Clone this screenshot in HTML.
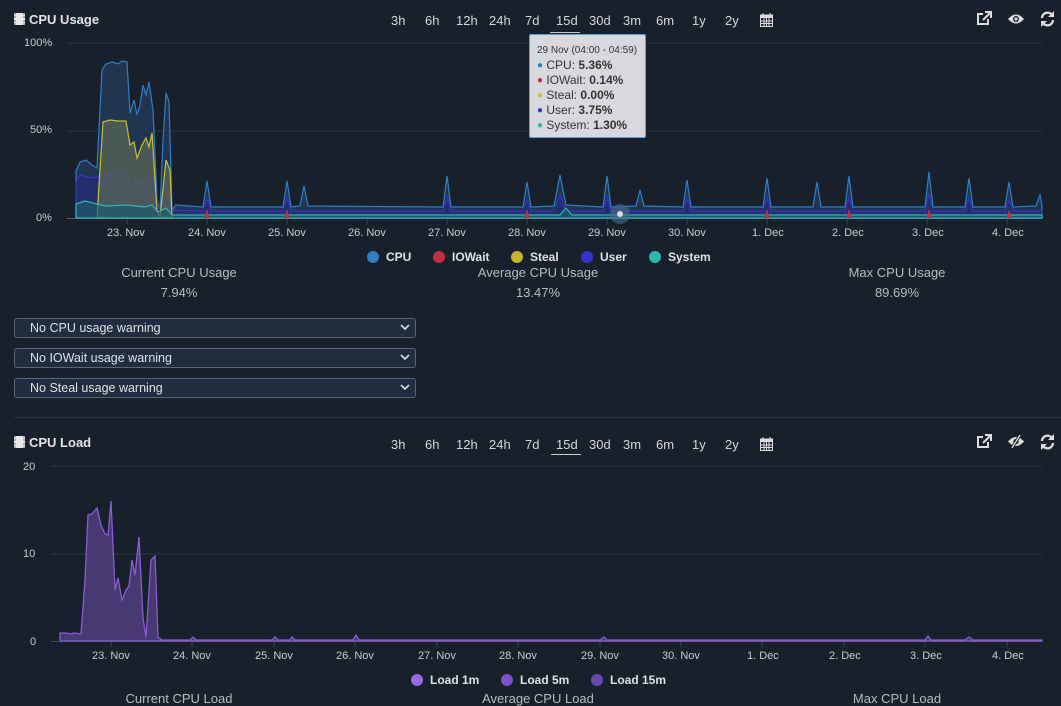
<!DOCTYPE html>
<html><head><meta charset="utf-8">
<style>
*{margin:0;padding:0;box-sizing:border-box}
body{width:1061px;height:693px;background:#18202b;font-family:"Liberation Sans",sans-serif;color:#d8dce0;position:relative;overflow:hidden}
.a{position:absolute;white-space:nowrap}
.title{font-weight:bold;font-size:13px;color:#e4e6e8}
.chip{display:inline-block;width:11px;height:12px;background:#e8e8e8;border-left:2px dotted #aaa;border-right:2px dotted #aaa;vertical-align:-1px;margin-right:4px}
.rng{font-size:13px;color:#d6d9dc}
.ax{font-size:11px;color:#c8ccd0}
.stat{font-size:13px;color:#b8bcc0;text-align:center;width:240px}
.sel{position:absolute;left:14px;width:402px;height:20px;border:1px solid #5c6672;border-radius:3px;background:#1f2d3e;font-size:12.5px;color:#dfe2e5;padding:2px 0 0 15px}
.sel svg{position:absolute;right:5px;top:5px}
.lg{font-size:12px;font-weight:bold;color:#dfe2e5}
.dot{display:inline-block;width:12px;height:12px;border-radius:50%;vertical-align:-2px;margin-right:7px}
.td{font-size:10px;vertical-align:1px}
</style></head><body>

<div class="a title" style="left:14px;top:12px"><span class="chip"></span>CPU Usage</div>
<div class="a rng" style="top:13px;left:391px">3h</div>
<div class="a rng" style="top:13px;left:425px">6h</div>
<div class="a rng" style="top:13px;left:456px">12h</div>
<div class="a rng" style="top:13px;left:489px">24h</div>
<div class="a rng" style="top:13px;left:525px">7d</div>
<div class="a rng" style="top:13px;left:556px">15d</div>
<div class="a" style="top:32px;left:550px;width:30px;height:1px;background:#ccc"></div>
<div class="a rng" style="top:13px;left:589px">30d</div>
<div class="a rng" style="top:13px;left:623px">3m</div>
<div class="a rng" style="top:13px;left:656px">6m</div>
<div class="a rng" style="top:13px;left:692px">1y</div>
<div class="a rng" style="top:13px;left:725px">2y</div>
<svg class="a" style="left:760px;top:13px" width="13" height="14" viewBox="0 0 13 14"><rect x="0.5" y="2" width="12" height="11.5" fill="none" stroke="#ddd"/><rect x="0.5" y="2" width="12" height="3" fill="#ddd"/><path d="M3 0v3M10 0v3M1 8h11M1 10.5h11M4 5v8M6.5 5v8M9 5v8" stroke="#ddd" stroke-width="1"/></svg>
<svg class="a" style="left:976px;top:11px" width="16" height="15" viewBox="0 0 16 15"><path d="M7 3H2v10h10V8" fill="none" stroke="#ddd" stroke-width="2"/><path d="M9 1h6v6M15 1L7 9" fill="none" stroke="#ddd" stroke-width="2"/></svg>
<svg class="a" style="left:1007px;top:13px" width="18" height="12" viewBox="0 0 18 12"><path d="M1 6Q9 -3 17 6Q9 15 1 6Z" fill="#ddd"/><circle cx="9" cy="6" r="3" fill="#18202b"/><circle cx="9" cy="6" r="1.6" fill="#ddd"/></svg>
<svg class="a" style="left:1040px;top:11px" width="15" height="16" viewBox="0 0 15 16"><path d="M2 7A5.5 5.5 0 0 1 12 4M13 9A5.5 5.5 0 0 1 3 12" fill="none" stroke="#ddd" stroke-width="2.4"/><path d="M14 0v6h-6zM1 16v-6h6z" fill="#ddd"/></svg>

<div class="a ax" style="left:24px;top:37px">100%</div>
<div class="a ax" style="left:30px;top:124px">50%</div>
<div class="a ax" style="left:36px;top:212px">0%</div>
<svg class="a" style="left:0;top:0" width="1061" height="240">
<path d="M67 43H1042M67 131H1042" stroke="#2b3746" stroke-width="1"/>
<path d="M67 218.5H1042" stroke="#5a6470"/>
<path d="M127 218v6M207 218v6M287 218v6M367 218v6M447 218v6M527 218v6M607 218v6M687 218v6M767 218v6M847 218v6M927 218v6M1007 218v6" stroke="#3a4656"/>
<path d="M76,171 L80,162 L86,160 L92,165 L97,168 L102,70 L106,64 L112,62 L118,64 L122,61 L127,62 L130,113 L134,100 L137,115 L140,105 L143,85 L146,95 L149,82 L153,110 L157,200 L160,210 L163,140 L166,93 L169,102 L172,210 L176,205 L203,207 L207,181 L211,207 L283,207 L287,181 L291,207 L300,206 L304,186 L308,206 L443,207 L447,176 L451,207 L523,207 L527,182 L531,207 L554,206 L560,175 L566,205 L603,207 L607,176 L611,207 L636,206 L640,190 L644,206 L683,207 L687,180 L691,207 L763,207 L767,178 L771,207 L813,207 L817,182 L821,207 L845,207 L849,176 L853,207 L925,207 L929,172 L933,207 L965,207 L969,178 L973,207 L1005,207 L1009,182 L1013,207 L1036,206 L1040,195 L1042,205 L1042,218 L76,218Z" fill="#1f3550" stroke="#2f7fc4" stroke-width="1.2"/>
<path d="M76,182 L80,175 L92,178 L103,175 L118,172 L127,173 L130,185 L145,180 L153,175 L160,212 L166,180 L172,210 L203,211 L207,198 L211,211 L283,211 L287,197 L291,211 L443,211 L447,195 L451,211 L523,211 L527,200 L531,211 L554,211 L560,195 L566,211 L603,211 L607,195 L611,211 L683,211 L687,198 L691,211 L763,211 L767,197 L771,211 L845,211 L849,197 L853,211 L925,211 L929,193 L933,211 L965,211 L969,197 L973,211 L1005,211 L1009,200 L1013,211 L1042,211 L1042,218 L76,218Z" fill="#242e6e" fill-opacity="0.85" stroke="#3434c8" stroke-width="1.2"/>
<path d="M97,218 L103,122 L110,120 L118,121 L126,121 L130,145 L134,142 L137,158 L142,145 L146,138 L149,147 L152,133 L157,210 L160,217 L166,160 L170,170 L172,218Z" fill="#5d6a58" fill-opacity="0.7" stroke="#c9c030" stroke-width="1.2"/>
<path d="M76,204 L85,201 L105,206 L127,205 L145,207 L152,205 L158,212 L166,208 L172,215 L560,215 L566,208 L572,215 L1042,215 L1042,218 L76,218Z" fill="#1f5a6a" fill-opacity="0.7" stroke="#2fb8b0" stroke-width="1.2"/>
<path d="M205,218 L207,210 L209,218M285,218 L287,210 L289,218M525,218 L527,210 L529,218M765,218 L767,210 L769,218M847,218 L849,210 L851,218M927,218 L929,210 L931,218M1007,218 L1009,211 L1011,218" fill="#b83040" stroke="#c03040"/>
<circle cx="620" cy="214" r="10" fill="#4a6a90" fill-opacity="0.6"/>
<circle cx="620" cy="214" r="3" fill="#ddd"/>
</svg>
<div class="a ax" style="left:107px;top:227px">23. Nov</div>
<div class="a ax" style="left:188px;top:227px">24. Nov</div>
<div class="a ax" style="left:268px;top:227px">25. Nov</div>
<div class="a ax" style="left:348px;top:227px">26. Nov</div>
<div class="a ax" style="left:428px;top:227px">27. Nov</div>
<div class="a ax" style="left:508px;top:227px">28. Nov</div>
<div class="a ax" style="left:588px;top:227px">29. Nov</div>
<div class="a ax" style="left:668px;top:227px">30. Nov</div>
<div class="a ax" style="left:752px;top:227px">1. Dec</div>
<div class="a ax" style="left:832px;top:227px">2. Dec</div>
<div class="a ax" style="left:912px;top:227px">3. Dec</div>
<div class="a ax" style="left:992px;top:227px">4. Dec</div>

<div class="a" style="left:529px;top:34px;width:117px;height:104px;background:#d8d9dc;border:1px solid #5aa0e0;border-radius:2px;color:#333;font-size:12px;padding:9px 0 0 7px;line-height:15px">
<div style="font-size:10px;line-height:13px;margin-bottom:1px">29 Nov (04:00 - 04:59)</div>
<div><span class="td" style="color:#2f7fc4">●</span> CPU: <b>5.36%</b></div>
<div><span class="td" style="color:#c03040">●</span> IOWait: <b>0.14%</b></div>
<div><span class="td" style="color:#c9c030">●</span> Steal: <b>0.00%</b></div>
<div><span class="td" style="color:#3434c8">●</span> User: <b>3.75%</b></div>
<div><span class="td" style="color:#2fb8b0">●</span> System: <b>1.30%</b></div>
</div>

<div class="a lg" style="left:367px;top:250px"><span class="dot" style="background:#2f7fc4"></span>CPU</div>
<div class="a lg" style="left:433px;top:250px"><span class="dot" style="background:#c03040"></span>IOWait</div>
<div class="a lg" style="left:511px;top:250px"><span class="dot" style="background:#c0b430"></span>Steal</div>
<div class="a lg" style="left:581px;top:250px"><span class="dot" style="background:#3434c8"></span>User</div>
<div class="a lg" style="left:649px;top:250px"><span class="dot" style="background:#2fb8b0"></span>System</div>

<div class="a stat" style="left:59px;top:265px">Current CPU Usage</div>
<div class="a stat" style="left:59px;top:285px">7.94%</div>
<div class="a stat" style="left:418px;top:265px">Average CPU Usage</div>
<div class="a stat" style="left:418px;top:285px">13.47%</div>
<div class="a stat" style="left:777px;top:265px">Max CPU Usage</div>
<div class="a stat" style="left:777px;top:285px">89.69%</div>

<div class="sel" style="top:318px">No CPU usage warning<svg width="10" height="7"><path d="M1 1l4 4 4-4" fill="none" stroke="#ddd" stroke-width="1.6"/></svg></div>
<div class="sel" style="top:348px">No IOWait usage warning<svg width="10" height="7"><path d="M1 1l4 4 4-4" fill="none" stroke="#ddd" stroke-width="1.6"/></svg></div>
<div class="sel" style="top:378px">No Steal usage warning<svg width="10" height="7"><path d="M1 1l4 4 4-4" fill="none" stroke="#ddd" stroke-width="1.6"/></svg></div>

<div class="a" style="left:14px;top:417px;width:1047px;height:1px;background:#2a3442"></div>

<div class="a title" style="left:14px;top:435px"><span class="chip"></span>CPU Load</div>
<div class="a rng" style="top:437px;left:391px">3h</div>
<div class="a rng" style="top:437px;left:425px">6h</div>
<div class="a rng" style="top:437px;left:456px">12h</div>
<div class="a rng" style="top:437px;left:489px">24h</div>
<div class="a rng" style="top:437px;left:525px">7d</div>
<div class="a rng" style="top:437px;left:556px">15d</div>
<div class="a" style="top:454px;left:551px;width:30px;height:1px;background:#ccc"></div>
<div class="a rng" style="top:437px;left:589px">30d</div>
<div class="a rng" style="top:437px;left:623px">3m</div>
<div class="a rng" style="top:437px;left:656px">6m</div>
<div class="a rng" style="top:437px;left:692px">1y</div>
<div class="a rng" style="top:437px;left:725px">2y</div>
<svg class="a" style="left:760px;top:437px" width="13" height="14" viewBox="0 0 13 14"><rect x="0.5" y="2" width="12" height="11.5" fill="none" stroke="#ddd"/><rect x="0.5" y="2" width="12" height="3" fill="#ddd"/><path d="M3 0v3M10 0v3M1 8h11M1 10.5h11M4 5v8M6.5 5v8M9 5v8" stroke="#ddd" stroke-width="1"/></svg>
<svg class="a" style="left:976px;top:434px" width="16" height="15" viewBox="0 0 16 15"><path d="M7 3H2v10h10V8" fill="none" stroke="#ddd" stroke-width="2"/><path d="M9 1h6v6M15 1L7 9" fill="none" stroke="#ddd" stroke-width="2"/></svg>
<svg class="a" style="left:1007px;top:435px" width="18" height="13" viewBox="0 0 18 13"><path d="M1 6.5Q9 -2.5 17 6.5Q9 15.5 1 6.5Z" fill="#ddd"/><circle cx="9" cy="6.5" r="2.6" fill="#18202b"/><path d="M13 0L5 13" stroke="#18202b" stroke-width="3"/><path d="M13 0L5 13" stroke="#ddd" stroke-width="1.3"/></svg>
<svg class="a" style="left:1040px;top:434px" width="15" height="16" viewBox="0 0 15 16"><path d="M2 7A5.5 5.5 0 0 1 12 4M13 9A5.5 5.5 0 0 1 3 12" fill="none" stroke="#ddd" stroke-width="2.4"/><path d="M14 0v6h-6zM1 16v-6h6z" fill="#ddd"/></svg>

<div class="a ax" style="left:23px;top:461px">20</div>
<div class="a ax" style="left:23px;top:548px">10</div>
<div class="a ax" style="left:30px;top:636px">0</div>
<svg class="a" style="left:0;top:450px" width="1061" height="210">
<path d="M51 16H1042M51 104H1042" stroke="#2b3746"/>
<path d="M51 191.5H1042" stroke="#3a4656"/>
<path d="M111 191v6M192 191v6M274 191v6M355 191v6M437 191v6M518 191v6M600 191v6M681 191v6M762 191v6M844 191v6M925 191v6M1007 191v6" stroke="#3a4656"/>
<path d="M60,183 L66,183 L70,184 L74,183 L81,184 L85,130 L88,65 L92,64 L97,58 L101,75 L105,84 L108,85 L111,51 L115,140 L118,128 L122,150 L126,140 L129,136 L132,110 L135,125 L139,87 L143,168 L146,187 L151,110 L155,106 L158,187 L162,190 L190,190 L193,187 L196,190 L272,190 L275,187 L278,190 L290,190 L292,187 L295,190 L353,190 L356,185 L359,190 L600,190 L604,187 L607,190 L925,190 L928,186 L931,190 L965,190 L969,187 L973,190 L1042,190 L1042,191 L60,191Z" fill="#473a72" stroke="#8a5cd0" stroke-width="1.3"/>
</svg>
<div class="a ax" style="left:92px;top:650px">23. Nov</div>
<div class="a ax" style="left:173px;top:650px">24. Nov</div>
<div class="a ax" style="left:255px;top:650px">25. Nov</div>
<div class="a ax" style="left:336px;top:650px">26. Nov</div>
<div class="a ax" style="left:418px;top:650px">27. Nov</div>
<div class="a ax" style="left:499px;top:650px">28. Nov</div>
<div class="a ax" style="left:581px;top:650px">29. Nov</div>
<div class="a ax" style="left:662px;top:650px">30. Nov</div>
<div class="a ax" style="left:747px;top:650px">1. Dec</div>
<div class="a ax" style="left:829px;top:650px">2. Dec</div>
<div class="a ax" style="left:910px;top:650px">3. Dec</div>
<div class="a ax" style="left:992px;top:650px">4. Dec</div>

<div class="a lg" style="left:411px;top:673px"><span class="dot" style="background:#9b6ae8"></span>Load 1m</div>
<div class="a lg" style="left:501px;top:673px"><span class="dot" style="background:#7c54c8"></span>Load 5m</div>
<div class="a lg" style="left:591px;top:673px"><span class="dot" style="background:#6a48a8"></span>Load 15m</div>

<div class="a stat" style="left:59px;top:691px">Current CPU Load</div>
<div class="a stat" style="left:418px;top:691px">Average CPU Load</div>
<div class="a stat" style="left:777px;top:691px">Max CPU Load</div>
</body></html>
